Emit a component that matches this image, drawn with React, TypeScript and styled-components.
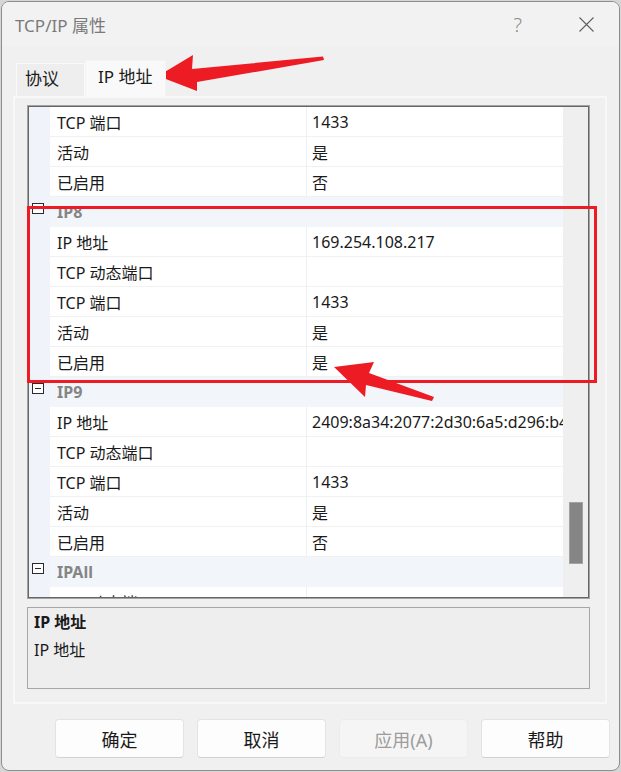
import React from "react";
import styled, { createGlobalStyle } from "styled-components";

const GlobalStyle = createGlobalStyle`
  html, body {
    margin: 0;
    padding: 0;
    background: #d6d6d6;
  }
  body {
    font-family: "Noto Sans", "Noto Sans CJK SC", sans-serif;
    color: #1a1a1a;
  }
  * {
    box-sizing: border-box;
  }
`;

type Row = { name: string; value?: string };
type Group = { title?: string; rows: Row[] };

// 属性表的数据 (第一组已经滚过了标题)
const groups: Group[] = [
  {
    rows: [
      { name: "TCP 端口", value: "1433" },
      { name: "活动", value: "是" },
      { name: "已启用", value: "否" },
    ],
  },
  {
    title: "IP8",
    rows: [
      { name: "IP 地址", value: "169.254.108.217" },
      { name: "TCP 动态端口", value: "" },
      { name: "TCP 端口", value: "1433" },
      { name: "活动", value: "是" },
      { name: "已启用", value: "是" },
    ],
  },
  {
    title: "IP9",
    rows: [
      { name: "IP 地址", value: "2409:8a34:2077:2d30:6a5:d296:b4b5:1c2e" },
      { name: "TCP 动态端口", value: "" },
      { name: "TCP 端口", value: "1433" },
      { name: "活动", value: "是" },
      { name: "已启用", value: "否" },
    ],
  },
  {
    title: "IPAll",
    rows: [{ name: "TCP 动态端口", value: "" }],
  },
];

const App = () => {
  return (
    <SPage>
      <GlobalStyle />
      <SWindow>
        <STitleBar>
          <STitle>TCP/IP 属性</STitle>
          <SHelp>?</SHelp>
          <SClose>
            <svg width="15" height="15" viewBox="0 0 15 15">
              <path d="M0.5 0.5 L14.5 14.5 M14.5 0.5 L0.5 14.5" stroke="#5f5f5f" strokeWidth="1.1" fill="none" />
            </svg>
          </SClose>
        </STitleBar>

        <STabStrip>
          <STab>协议</STab>
          <STab $active>IP 地址</STab>
        </STabStrip>

        <STabPage>
          <SGrid>
            <SGridInner>
              <SRowList>
                {groups.map((group, gi) => (
                  <React.Fragment key={gi}>
                    {group.title && (
                      <SCategoryRow>
                        <SGutter>
                          <SExpander />
                        </SGutter>
                        <SCategoryTitle>{group.title}</SCategoryTitle>
                      </SCategoryRow>
                    )}
                    {group.rows.map((row, ri) => (
                      <SPropRow key={ri}>
                        <SGutter />
                        <SNameCell>{row.name}</SNameCell>
                        <SValueCell>{row.value}</SValueCell>
                      </SPropRow>
                    ))}
                  </React.Fragment>
                ))}
              </SRowList>
              <SScrollTrack>
                <SScrollThumb />
              </SScrollTrack>
            </SGridInner>
          </SGrid>

          <SDescription>
            <SDescTitle>IP 地址</SDescTitle>
            <SDescText>IP 地址</SDescText>
          </SDescription>
        </STabPage>

        <SButtonBar>
          <SButton>确定</SButton>
          <SButton>取消</SButton>
          <SButton disabled>应用(A)</SButton>
          <SButton>帮助</SButton>
        </SButtonBar>
      </SWindow>

      {/* 红色标注 */}
      <SAnnotations width="621" height="772" viewBox="0 0 621 772">
        <polygon
          points="158,76 193,55 192,69 323,56.5 324,60 197,82 197,91"
          fill="#ed1c24"
        />
        <rect x="28.5" y="207.5" width="567" height="174" fill="none" stroke="#ed1c24" strokeWidth="3" />
        <polygon
          points="334,367 374,362 369,373 434,397 432,401 366,385 365,397"
          fill="#ed1c24"
        />
      </SAnnotations>
    </SPage>
  );
};

export default App;

const SPage = styled.div`
  position: relative;
  width: 621px;
  height: 772px;
  overflow: hidden;
`;

const SWindow = styled.div`
  margin: 1px 0 0 1px;
  width: 619px;
  height: 770px;
  background: #f0f0f0;
  border: 1px solid #8e8e8e;
  border-radius: 8px;
  display: flex;
  flex-direction: column;
  overflow: hidden;
`;

const STitleBar = styled.div`
  height: 44px;
  display: flex;
  align-items: center;
  padding: 0 25px 0 13px;
  background: #f2f2f2;
`;

const STitle = styled.div`
  flex: 1;
  font-size: 17px;
  color: #7a7a7a;
`;

const SHelp = styled.div`
  font-size: 20px;
  color: #8c8c8c;
  margin-right: 57px;
  font-weight: 300;
`;

const SClose = styled.div`
  display: flex;
  align-items: center;
`;

const STabStrip = styled.div`
  margin-top: 14px;
  height: 36px;
  display: flex;
  align-items: flex-end;
  padding-left: 14px;
  position: relative;
  z-index: 1;
`;

const STab = styled.div<{ $active?: boolean }>`
  height: ${({ $active }) => ($active ? "37px" : "33px")};
  margin-bottom: ${({ $active }) => ($active ? "-1px" : "0")};
  padding: ${({ $active }) => ($active ? "0 13px 7px 12px" : "0 13px 5px 8px")};
  width: ${({ $active }) => ($active ? "81px" : "69px")};
  display: flex;
  align-items: center;
  font-size: 17px;
  white-space: nowrap;
  background: ${({ $active }) => ($active ? "#f9f9f9" : "#eeeeee")};
  border: 1px solid ${({ $active }) => ($active ? "#f4f4f4" : "#f9f9f9")};
  border-bottom: none;
  color: #1a1a1a;
`;

const STabPage = styled.div`
  margin-left: 11px;
  width: 594px;
  height: 608px;
  background: #f0f0f0;
  border: 2px solid #f8f8f8;
  padding: 7px 0 0 12px;
`;

const SGrid = styled.div`
  width: 563px;
  height: 494px;
  border: 1px solid #a3a3a3;
`;

const SGridInner = styled.div`
  height: 100%;
  border: 1px solid #666666;
  display: flex;
  background: #ffffff;
`;

const SRowList = styled.div`
  flex: 1;
  overflow: hidden;
`;

const SPropRow = styled.div`
  display: grid;
  grid-template-columns: 21px 257px 256px;
  height: 30px;
`;

const SCategoryRow = styled.div`
  display: grid;
  grid-template-columns: 21px 1fr;
  height: 30px;
  background: #f2f5fa;
`;

const SGutter = styled.div`
  background: #f0f4fa;
  position: relative;
`;

const SExpander = styled.div`
  position: absolute;
  left: 3px;
  top: 6px;
  width: 12px;
  height: 11px;
  border: 1px solid #2b2b2b;
  background: #ffffff;

  &::after {
    content: "";
    position: absolute;
    left: 2px;
    right: 2px;
    top: 4px;
    height: 1px;
    background: #2b2b2b;
  }
`;

const SCategoryTitle = styled.div`
  display: flex;
  align-items: center;
  padding-left: 7px;
  font-size: 16px;
  font-weight: 700;
  color: #858585;
`;

const SNameCell = styled.div`
  display: flex;
  align-items: center;
  padding-left: 7px;
  font-size: 16px;
  white-space: nowrap;
  border-right: 1px solid #edf0f4;
  border-bottom: 1px solid #f1f1f1;
`;

const SValueCell = styled.div`
  display: flex;
  align-items: center;
  padding-left: 5px;
  font-size: 16px;
  white-space: nowrap;
  overflow: hidden;
  border-bottom: 1px solid #f1f1f1;
`;

const SScrollTrack = styled.div`
  width: 25px;
  background: #efefef;
  padding: 395px 0 0 6px;
`;

const SScrollThumb = styled.div`
  width: 14px;
  height: 62px;
  background: #858585;
  border: 1px solid #a2a2a2;
`;

const SDescription = styled.div`
  margin-top: 8px;
  width: 563px;
  height: 82px;
  border: 1px solid #a6a6a6;
  background: #eeeeee;
  padding: 3px 6px;
`;

const SDescTitle = styled.div`
  font-size: 16px;
  font-weight: 700;
  line-height: 22px;
`;

const SDescText = styled.div`
  margin-top: 6px;
  font-size: 16px;
  line-height: 22px;
`;

const SButtonBar = styled.div`
  margin-top: 15px;
  display: flex;
  justify-content: flex-end;
  gap: 13px;
  padding-right: 9px;
`;

const SButton = styled.button`
  width: 129px;
  height: 39px;
  background: #fdfdfd;
  border: 1px solid #e3e3e3;
  border-bottom-color: #d2d2d2;
  border-radius: 4px;
  font-family: "Noto Sans", "Noto Sans CJK SC", sans-serif;
  font-size: 18px;
  color: #1a1a1a;
  padding: 0;

  &:disabled {
    background: #f5f5f5;
    border-color: #ececec;
    color: #9c9c9c;
  }
`;

const SAnnotations = styled.svg`
  position: absolute;
  left: 0;
  top: 0;
  pointer-events: none;
`;
